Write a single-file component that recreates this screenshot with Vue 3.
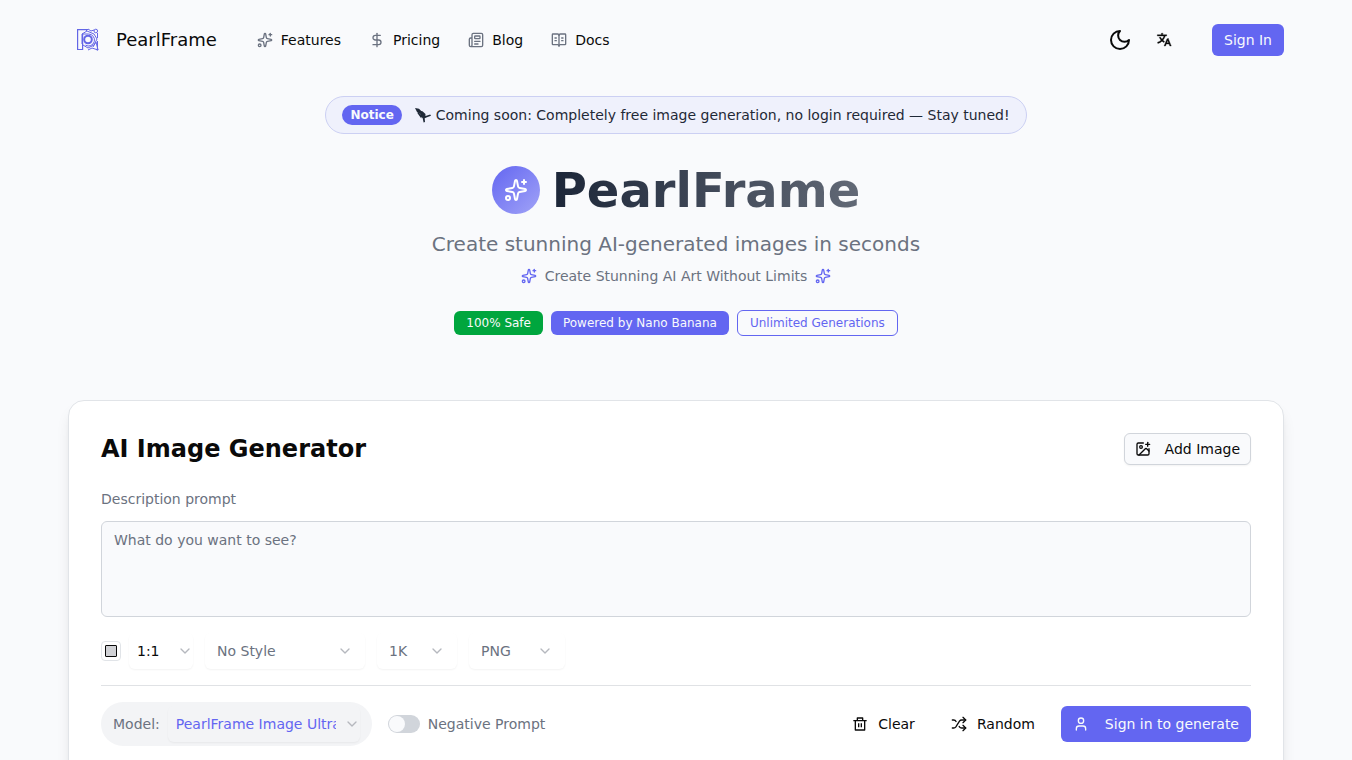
<template>
  <div class="page">
    <header class="header">
      <a href="#" class="brand">
        <svg class="logo" viewBox="0 0 32 32" fill="none" stroke="currentColor" aria-hidden="true">
          <path d="M15 5.600H5.600V25.500h5V10" stroke-width="1.200" />
          <path d="M14 7l2-2 3 2 3-1M25.500 9v5M25.500 17v9M26 26l-6-2-4 2M21 23l3-5 2 8" stroke-width="1" />
          <path d="M10 20V10h6.500a6 6 0 1 1-3 11.200M10 10l5-3 7 3 3 5-3 6-6 3-5-3" stroke-width="1" />
          <circle cx="16" cy="15.500" r="3.800" stroke-width="2" />
          <circle cx="23.800" cy="7" r="1.800" stroke-width="1" />
          <circle cx="25.300" cy="25.500" r="1" fill="currentColor" stroke="none" />
        </svg>
        <span>PearlFrame</span>
      </a>
      <nav class="nav">
        <a v-for="link in links" :key="link.label" href="#">
          <svg class="icon" viewBox="0 0 24 24" aria-hidden="true">
            <path v-for="d in icons[link.icon]" :key="d" :d="d" />
          </svg>
          {{ link.label }}
        </a>
      </nav>
      <div class="tools">
        <button class="tool" aria-label="Toggle theme">
          <svg class="icon large" viewBox="0 0 24 24"><path d="M12 3a6 6 0 0 0 9 9 9 9 0 1 1-9-9Z" /></svg>
        </button>
        <button class="tool" aria-label="Change language">
          <svg class="icon solid bold" viewBox="0 0 24 24">
            <path d="M18.5 10L22.9 21H20.745L19.544 18H15.454L14.255 21H12.101L16.5 10H18.5ZM10 2V4H16V6L14.032 6C13.242 8.366 12 10.506 10.411 12.301C11.134 12.946 11.917 13.518 12.747 14.008L11.997 15.885C10.924 15.278 9.919 14.552 9 13.725C7.214 15.332 5.109 16.555 2.799 17.273L2.263 15.344C4.239 14.72 6.045 13.674 7.59 12.302C6.463 11.028 5.509 9.58 4.767 8H7.007C7.57 9.039 8.24 10.003 9 10.877C10.228 9.465 11.22 7.816 11.91 6H2V4H8V2H10ZM17.5 12.885L16.253 16H18.745L17.5 12.885Z" />
          </svg>
        </button>
      </div>
      <button class="primary sign-in">Sign In</button>
    </header>

    <main>
      <section class="hero">
        <div class="notice">
          <span class="tag">Notice</span>
          <span class="message">
            <svg class="rocket" viewBox="0 0 18 16" aria-hidden="true">
              <path d="M1 1l4 .8 5 5 1.500 2.200 4.700-1.600.8 1.400-4.600 1.700-1.700.8.300 3.700-1.400.6-1-4.600-1.500-1-.6-3L3 5z" />
              <path d="M4.500 3.200l.2 2.400L7.300 8v3.500L3.500 6.200zM5 4l3.500.2L11.500 7l-.2 2z" />
            </svg>
            Coming soon: Completely free image generation, no login required — Stay tuned!
          </span>
        </div>
        <div class="title">
          <span class="orb">
            <svg class="icon large" viewBox="0 0 24 24" aria-hidden="true">
              <path v-for="d in icons.sparkles" :key="d" :d="d" />
            </svg>
          </span>
          <h1>PearlFrame</h1>
        </div>
        <p class="subtitle">Create stunning AI-generated images in seconds</p>
        <p class="tagline">
          <svg class="icon" viewBox="0 0 24 24" aria-hidden="true">
            <path v-for="d in icons.sparkles" :key="d" :d="d" />
          </svg>
          Create Stunning AI Art Without Limits
          <svg class="icon" viewBox="0 0 24 24" aria-hidden="true">
            <path v-for="d in icons.sparkles" :key="d" :d="d" />
          </svg>
        </p>
        <div class="badges">
          <span class="badge green">100% Safe</span>
          <span class="badge">Powered by Nano Banana</span>
          <span class="badge outline">Unlimited Generations</span>
        </div>
      </section>

      <section class="card">
        <div class="card-head">
          <h2>AI Image Generator</h2>
          <button class="add">
            <svg class="icon" viewBox="0 0 24 24" aria-hidden="true">
              <path v-for="d in icons.image" :key="d" :d="d" />
            </svg>
            Add Image
          </button>
        </div>

        <label class="prompt-label" for="prompt">Description prompt</label>
        <textarea id="prompt" v-model="prompt" placeholder="What do you want to see?"></textarea>

        <div class="options">
          <div class="ratio">
            <span class="swatch"><span></span></span>
            <div class="select small dark">
              <select v-model="ratio" aria-label="Aspect ratio">
                <option>1:1</option>
                <option>16:9</option>
                <option>9:16</option>
              </select>
              <svg class="icon" viewBox="0 0 24 24"><path d="m6 9 6 6 6-6" /></svg>
            </div>
          </div>
          <div v-for="option in options" :key="option.label" class="select" :class="option.size">
            <select v-model="option.value" :aria-label="option.label">
              <option v-for="choice in option.choices" :key="choice">{{ choice }}</option>
            </select>
            <svg class="icon" viewBox="0 0 24 24"><path d="m6 9 6 6 6-6" /></svg>
          </div>
        </div>

        <div class="actions">
          <div class="model">
            <label for="model">Model:</label>
            <div class="select model-select">
              <select id="model" v-model="model">
                <option>PearlFrame Image Ultra</option>
                <option>PearlFrame Image Lite</option>
              </select>
              <svg class="icon" viewBox="0 0 24 24"><path d="m6 9 6 6 6-6" /></svg>
            </div>
          </div>
          <label class="switch">
            <input v-model="negative" type="checkbox">
            Negative Prompt
          </label>
          <div class="buttons">
            <button class="ghost" @click="prompt = ''">
              <svg class="icon solid" viewBox="0 0 24 24" aria-hidden="true">
                <path d="M17 6H22V8H20V21C20 21.552 19.552 22 19 22H5C4.448 22 4 21.552 4 21V8H2V6H7V3C7 2.448 7.448 2 8 2H16C16.552 2 17 2.448 17 3V6ZM18 8H6V20H18V8ZM9 11H11V17H9V11ZM13 11H15V17H13V11ZM9 4V6H15V4H9Z" />
              </svg>
              Clear
            </button>
            <button class="ghost">
              <svg class="icon" viewBox="0 0 24 24" aria-hidden="true">
                <path v-for="d in icons.shuffle" :key="d" :d="d" />
              </svg>
              Random
            </button>
            <button class="primary generate">
              <svg class="icon" viewBox="0 0 24 24" aria-hidden="true">
                <path v-for="d in icons.user" :key="d" :d="d" />
              </svg>
              Sign in to generate
            </button>
          </div>
        </div>
      </section>
    </main>
  </div>
</template>

<script setup>
import { ref } from 'vue';

const prompt = ref('');
const ratio = ref('1:1');
const model = ref('PearlFrame Image Ultra');
const negative = ref(false);

const links = [
  { label: 'Features', icon: 'sparkles' },
  { label: 'Pricing', icon: 'dollar' },
  { label: 'Blog', icon: 'news' },
  { label: 'Docs', icon: 'book' }
];

const options = ref([
  { label: 'Style', size: 'wide', value: 'No Style', choices: ['No Style', 'Photo', 'Anime'] },
  { label: 'Resolution', size: 'narrow', value: '1K', choices: ['1K', '2K', '4K'] },
  { label: 'Format', size: 'medium', value: 'PNG', choices: ['PNG', 'JPG', 'WEBP'] }
]);

const icons = {
  sparkles: [
    'M11.017 2.814a1 1 0 0 1 1.966 0l1.051 5.558a2 2 0 0 0 1.594 1.594l5.558 1.051a1 1 0 0 1 0 1.966l-5.558 1.051a2 2 0 0 0-1.594 1.594l-1.051 5.558a1 1 0 0 1-1.966 0l-1.051-5.558a2 2 0 0 0-1.594-1.594l-5.558-1.051a1 1 0 0 1 0-1.966l5.558-1.051a2 2 0 0 0 1.594-1.594z',
    'M20 2v4',
    'M22 4h-4',
    'M2 20a2 2 0 1 0 4 0 2 2 0 1 0-4 0'
  ],
  dollar: ['M12 2v20', 'M17 5H9.500a3.500 3.500 0 0 0 0 7h5a3.500 3.500 0 0 1 0 7H6'],
  news: [
    'M15 18h-5',
    'M18 14h-8',
    'M4 22h16a2 2 0 0 0 2-2V4a2 2 0 0 0-2-2H8a2 2 0 0 0-2 2v16a2 2 0 0 1-4 0v-9a2 2 0 0 1 2-2h2',
    'M11 6h6a1 1 0 0 1 1 1v2a1 1 0 0 1-1 1h-6a1 1 0 0 1-1-1V7a1 1 0 0 1 1-1z'
  ],
  book: [
    'M12 5v16',
    'M16 13h2',
    'M16 9h2',
    'M3 19a1 1 0 0 1-1-1V4a1 1 0 0 1 1-1h7a2 2 0 0 1 2 2 2 2 0 0 1 2-2h7a1 1 0 0 1 1 1v14a1 1 0 0 1-1 1h-7a2 2 0 0 0-2 2 2 2 0 0 0-2-2z',
    'M6 13h2',
    'M6 9h2'
  ],
  image: [
    'M16 5h6',
    'M19 2v6',
    'M21 11.500V19a2 2 0 0 1-2 2H5a2 2 0 0 1-2-2V5a2 2 0 0 1 2-2h7.500',
    'm21 15-3.086-3.086a2 2 0 0 0-2.828 0L6 21',
    'M7 9a2 2 0 1 0 4 0 2 2 0 1 0-4 0'
  ],
  shuffle: [
    'm18 14 4 4-4 4',
    'm18 2 4 4-4 4',
    'M2 18h1.973a4 4 0 0 0 3.300-1.700l5.454-8.600a4 4 0 0 1 3.300-1.700H22',
    'M2 6h1.972a4 4 0 0 1 3.600 2.200',
    'M22 18h-6.041a4 4 0 0 1-3.300-1.800l-.359-.450'
  ],
  user: [
    'M19 21v-2a4 4 0 0 0-4-4H9a4 4 0 0 0-4 4v2',
    'M8 7a4 4 0 1 0 8 0 4 4 0 1 0-8 0'
  ]
};
</script>

<style>
body {
  margin: 0;
  background: #f9fafc;
}
</style>

<style scoped>
.page {
  box-sizing: border-box;
  max-width: 1280px;
  margin: 0 auto;
  padding: 0 32px 32px;
  font-family: "DejaVu Sans", sans-serif;
  font-size: 14px;
  line-height: 20px;
  color: #0a0a0a;
}
h1, h2, p {
  margin: 0;
}
a {
  color: inherit;
  text-decoration: none;
}
button, select, textarea {
  box-sizing: border-box;
  font: inherit;
  color: inherit;
}
button {
  display: flex;
  align-items: center;
  justify-content: center;
  padding: 0;
  border: none;
  background: none;
  cursor: pointer;
  white-space: nowrap;
}
.icon {
  flex: none;
  width: 16px;
  height: 16px;
  fill: none;
  stroke: currentColor;
  stroke-width: 2;
  stroke-linecap: round;
  stroke-linejoin: round;
}
.icon.large {
  width: 24px;
  height: 24px;
}
.icon.solid {
  fill: currentColor;
  stroke: none;
}
.icon.bold {
  stroke: currentColor;
  stroke-width: 0.5;
}
.primary {
  background: #6366f1;
  color: #f8fafc;
  border-radius: 6px;
}

.header {
  display: flex;
  align-items: center;
  height: 80px;
}
.brand {
  display: flex;
  align-items: center;
  gap: 12px;
  padding-left: 4px;
  font-size: 18px;
  line-height: 28px;
}
.logo {
  width: 32px;
  height: 32px;
  color: #6366e6;
}
.nav {
  display: flex;
  gap: 28px;
  margin-left: 40px;
}
.nav a {
  display: flex;
  align-items: center;
  gap: 8px;
}
.nav .icon {
  color: #6b7280;
}
.tools {
  display: flex;
  gap: 4px;
  margin-left: auto;
}
.tool {
  width: 40px;
  height: 40px;
}
.sign-in {
  height: 32px;
  margin-left: 28px;
  padding: 0 12px;
}

.hero {
  display: flex;
  flex-direction: column;
  align-items: center;
  padding: 16px 0 64px;
}
.notice {
  display: flex;
  align-items: center;
  gap: 12px;
  padding: 8px 16px;
  border: 1px solid #ccd0f3;
  border-radius: 20px;
  background: #eff1fc;
  color: #1f2937;
}
.tag {
  padding: 2px 8px;
  border-radius: 10px;
  background: #6366f1;
  color: #f8fafc;
  font-size: 12px;
  line-height: 16px;
  font-weight: bold;
}
.message {
  display: flex;
  align-items: center;
  gap: 4px;
}
.rocket {
  width: 18px;
  height: 16px;
  fill: currentColor;
}
.title {
  display: flex;
  align-items: center;
  gap: 12px;
  margin-top: 32px;
}
.orb {
  display: flex;
  align-items: center;
  justify-content: center;
  width: 48px;
  height: 48px;
  border-radius: 50%;
  background: linear-gradient(135deg, #6366f1, #a1a3f7);
  color: #fff;
}
h1 {
  font-size: 48px;
  line-height: 48px;
  background: linear-gradient(to right, #1c2638, #626976);
  background-clip: text;
  color: transparent;
}
.subtitle {
  margin-top: 16px;
  font-size: 20px;
  line-height: 28px;
  color: #6b7280;
}
.tagline {
  display: flex;
  align-items: center;
  gap: 8px;
  margin-top: 8px;
  color: #6b7280;
}
.tagline .icon {
  color: #6366f1;
}
.badges {
  display: flex;
  align-items: center;
  gap: 8px;
  margin-top: 24px;
}
.badge {
  padding: 4px 12px;
  border-radius: 6px;
  background: #6366f1;
  color: #f8fafc;
  font-size: 12px;
  line-height: 16px;
}
.badge.green {
  background: #00a63e;
}
.badge.outline {
  border: 1px solid #6366f1;
  background: none;
  color: #6366f1;
}

.card {
  padding: 32px;
  border: 1px solid #e1e4e8;
  border-radius: 16px;
  background: #fff;
  box-shadow: 0 10px 15px -3px rgba(0, 0, 0, 0.1), 0 4px 6px -4px rgba(0, 0, 0, 0.1);
}
.card-head {
  display: flex;
  align-items: center;
  justify-content: space-between;
}
h2 {
  font-size: 24px;
  line-height: 32px;
}
.add {
  gap: 14px;
  height: 32px;
  padding: 0 10px;
  border: 1px solid #d1d5db;
  border-radius: 6px;
  background: #f9fafc;
  box-shadow: 0 1px 2px rgba(0, 0, 0, 0.05);
}
.prompt-label {
  display: block;
  margin: 24px 0 12px;
  color: #6b7280;
}
textarea {
  display: block;
  width: 100%;
  height: 96px;
  padding: 8px 12px;
  border: 1px solid #d1d5db;
  border-radius: 6px;
  background: #f9fafc;
  resize: none;
}
textarea::placeholder {
  color: #6b7280;
}
.options {
  display: flex;
  gap: 12px;
  padding: 16px 0;
  border-bottom: 1px solid #e0e2e5;
  color: #6b7280;
}
.ratio {
  display: flex;
  align-items: center;
  gap: 8px;
}
.swatch {
  display: flex;
  align-items: center;
  justify-content: center;
  box-sizing: border-box;
  width: 20px;
  height: 20px;
  border: 1px solid #e1e4e8;
  border-radius: 4px;
}
.swatch span {
  width: 10px;
  height: 10px;
  border: 1px solid #0a0a0a;
  border-radius: 1px;
  background: #d0d1d5;
}
.select {
  display: grid;
  align-items: center;
  height: 36px;
}
.select select {
  grid-area: 1 / 1;
  width: 100%;
  height: 36px;
  padding: 0 32px 0 12px;
  border: none;
  border-radius: 6px;
  background: none;
  box-shadow: 0 1px 2px rgba(0, 0, 0, 0.05);
  appearance: none;
}
.select .icon {
  grid-area: 1 / 1;
  justify-self: end;
  margin-right: 12px;
  color: #b5b8be;
  pointer-events: none;
}
.select.small {
  width: 64px;
}
.select.small select {
  padding: 0 16px 0 8px;
}
.select.small .icon {
  margin-right: 0;
}
.dark {
  color: #0a0a0a;
}
.select.wide {
  width: 160px;
}
.select.narrow {
  width: 80px;
}
.select.medium {
  width: 96px;
}

.actions {
  display: flex;
  align-items: center;
  gap: 16px;
  padding-top: 16px;
  color: #6b7280;
}
.model {
  display: flex;
  align-items: center;
  gap: 8px;
  padding: 4px 12px;
  border-radius: 22px;
  background: #f3f4f6;
}
.model-select {
  width: 192px;
  color: #6366f1;
}
.model-select select {
  padding: 0 24px 0 8px;
}
.select.model-select .icon {
  margin-right: 0;
}
.switch {
  display: flex;
  align-items: center;
  gap: 8px;
}
.switch input {
  display: flex;
  align-items: center;
  box-sizing: border-box;
  width: 32px;
  height: 18px;
  margin: 0;
  padding: 1px;
  border-radius: 9px;
  background: #d1d5db;
  appearance: none;
}
.switch input::before {
  content: "";
  width: 16px;
  height: 16px;
  border-radius: 50%;
  background: #f9fafc;
}
.switch input:checked {
  justify-content: flex-end;
  background: #6366f1;
}
.buttons {
  display: flex;
  gap: 16px;
  margin-left: auto;
  color: #0a0a0a;
}
.ghost {
  gap: 10px;
  height: 36px;
  padding: 0 10px;
}
.generate {
  gap: 16px;
  height: 36px;
  padding: 0 12px;
}
</style>
